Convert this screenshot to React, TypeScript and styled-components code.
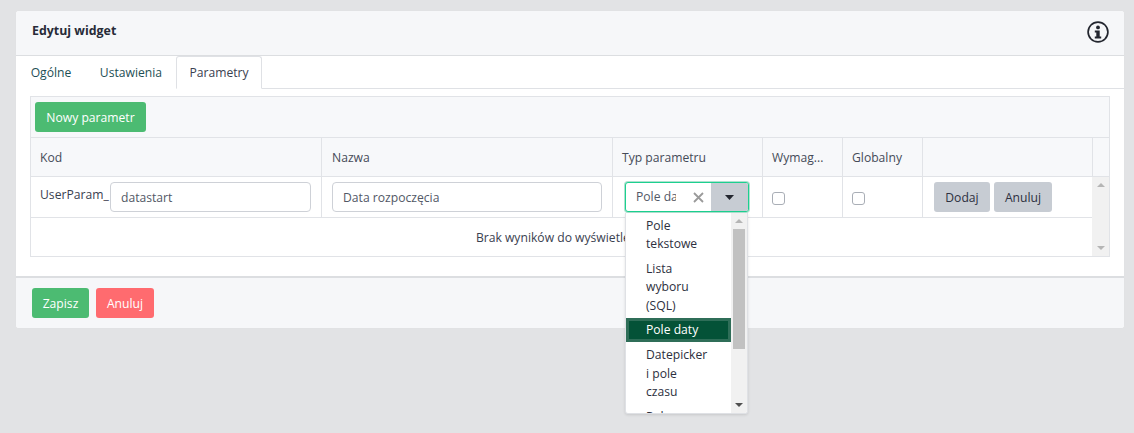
import React from "react";
import styled, { createGlobalStyle } from "styled-components";

const Global = createGlobalStyle`
  html, body { margin: 0; padding: 0; background: #e2e3e5; height: 433px; overflow: hidden; }
  body { font-family: "Open Sans", "Noto Sans", sans-serif; font-size: 12.15px; color: #2d3040; }
  * { box-sizing: border-box; }
`;

const Page = styled.div`
  padding: 11px 10px 0 16px;
`;
const Card = styled.section`
  background: #fff;
  border-radius: 3px;
  box-shadow: 0 0 1px rgba(0, 0, 0, 0.06);
`;
const CardHeader = styled.header`
  height: 45px;
  display: flex;
  align-items: center;
  justify-content: space-between;
  padding: 0 15px 2px 16px;
  background: #f6f7f9;
  border-bottom: 1px solid #dcdee1;
  border-radius: 3px 3px 0 0;
`;
const Title = styled.h2`
  margin: 0 0 4px;
  font-size: 12.4px;
  font-weight: 700;
  color: #272b38;
`;
const Tabs = styled.nav`
  height: 33px;
  display: flex;
  border-bottom: 1px solid #dfe1e5;
`;
const Tab = styled.div<{ $active?: boolean; $w: number }>`
  width: ${(p) => p.$w}px;
  height: 33px;
  display: flex;
  align-items: center;
  justify-content: center;
  color: ${(p) => (p.$active ? "#3a4150" : "#1e4f55")};
  background: #fff;
  border: 1px solid ${(p) => (p.$active ? "#dfe1e5" : "transparent")};
  border-bottom-color: ${(p) => (p.$active ? "#fff" : "transparent")};
  border-radius: 3px 3px 0 0;
`;
const TabBody = styled.div`
  padding: 7px 14px 19px 14px;
  border-bottom: 2px solid #dcdee1;
`;
const Grid = styled.div`
  border: 1px solid #e1e3e7;
  width: 1080px;
`;
const Toolbar = styled.div`
  height: 41px;
  padding: 5px 4px;
  background: #f7f8fa;
  border-bottom: 1px solid #e1e3e7;
`;
const Btn = styled.button<{ $bg: string; $fg?: string; $w: number }>`
  width: ${(p) => p.$w}px;
  height: 30px;
  padding: 0;
  border: 0;
  border-radius: 3px;
  font: inherit;
  color: ${(p) => p.$fg ?? "#fff"};
  background: ${(p) => p.$bg};
`;
const HeadRow = styled.div`
  display: grid;
  grid-template-columns: 291px 291px 150px 80px 80px 170px 1fr;
  height: 39px;
  background: #f7f8fa;
  border-bottom: 1px solid #e1e3e7;
`;
const HeadCell = styled.div`
  display: flex;
  align-items: center;
  padding: 0 9px;
  color: #454b58;
  border-right: 1px solid #e1e3e7;
  &:nth-child(2) { padding-left: 10px; }
  &:last-child { border-right: 0; }
`;
const BodyWrap = styled.div`
  display: flex;
  height: 79px;
`;
const BodyMain = styled.div`
  flex: 1;
  min-width: 0;
`;
const Row = styled.div`
  display: grid;
  grid-template-columns: 291px 291px 150px 80px 80px 170px;
  height: 41px;
  border-bottom: 1px solid #e1e3e7;
`;
const Cell = styled.div<{ $pad?: string }>`
  display: flex;
  align-items: center;
  padding: ${(p) => p.$pad ?? "0 10px"};
  border-right: 1px solid #e1e3e7;
  position: relative;
  &:last-child { border-right: 0; }
`;
const Prefix = styled.span`
  color: #3a4150;
  width: 70px;
  flex: none;
  margin-top: -6px;
  white-space: nowrap;
`;
const Input = styled.input`
  flex: 1;
  min-width: 0;
  height: 30px;
  padding: 0 10px;
  border: 1px solid #ced1d7;
  border-radius: 4px;
  background: #fff;
  font: inherit;
  color: #525866;
`;
const Select = styled.div`
  position: relative;
  display: flex;
  width: 124px;
  height: 30px;
  border: 1px solid #1cd08f;
  box-shadow: 0 0 0 1px rgba(25, 170, 120, 0.35);
  border-radius: 3px;
  overflow: hidden;
  background: #fff;
`;
const SelectValue = styled.div`
  width: 40px;
  margin-left: 10px;
  overflow: hidden;
  white-space: nowrap;
  line-height: 28px;
  color: #525866;
`;
const Clear = styled.div`
  width: 35px;
  padding-left: 9px;
  display: flex;
  align-items: center;
  justify-content: center;
  svg { display: block; }
`;
const Caret = styled.div`
  flex: 1;
  display: flex;
  align-items: center;
  justify-content: center;
  background: #c7ccd3;
`;
const Drop = styled.div`
  position: absolute;
  left: 12px;
  top: 36px;
  width: 123px;
  height: 201px;
  display: flex;
  background: #fff;
  border: 1px solid #dfe1e5;
  border-top: 0;
  border-radius: 0 0 3px 3px;
  box-shadow: 0 1px 3px rgba(0, 0, 0, 0.12);
  z-index: 5;
  overflow: hidden;
`;
const OptList = styled.div`
  width: 105px;
  flex: none;
  overflow: hidden;
`;
const Option = styled.div<{ $selected?: boolean }>`
  padding: ${(p) => (p.$selected ? "0 17px" : "4px 20px 2px")};
  margin-top: ${(p) => (p.$selected ? "1px" : "0")};
  line-height: 18.4px;
  color: ${(p) => (p.$selected ? "#fff" : "#2d3040")};
  background: ${(p) => (p.$selected ? "#045237" : "transparent")};
  border: ${(p) => (p.$selected ? "3px solid #2f6e58" : "0")};
`;
const DropBar = styled.div`
  flex: 1;
  position: relative;
  background: #f1f1f1;
`;
const Thumb = styled.div`
  position: absolute;
  top: 16px;
  left: 2px;
  right: 2px;
  height: 120px;
  background: #c1c1c1;
`;
const ArrowUp = styled.i<{ $c: string }>`
  position: absolute;
  top: 6px;
  left: 50%;
  margin-left: -4px;
  border: 4px solid transparent;
  border-top: 0;
  border-bottom: 4px solid ${(p) => p.$c};
`;
const ArrowDown = styled.i<{ $c: string }>`
  position: absolute;
  bottom: 6px;
  left: 50%;
  margin-left: -4px;
  border: 4px solid transparent;
  border-bottom: 0;
  border-top: 4px solid ${(p) => p.$c};
`;
const Check = styled.span`
  width: 13px;
  height: 13px;
  border: 1px solid #a9aeb6;
  border-radius: 3px;
  background: #fff;
  margin-top: 3px;
`;
const Actions = styled.div`
  display: flex;
  gap: 4px;
`;
const Empty = styled.div`
  height: 38px;
  display: flex;
  align-items: center;
  justify-content: center;
  color: #3a4150;
`;
const BodyBar = styled.div`
  width: 17px;
  flex: none;
  position: relative;
  background: #f1f1f1;
`;
const Footer = styled.footer`
  height: 50px;
  padding: 10px 16px;
  display: flex;
  gap: 7px;
  background: #f6f7f9;
  border-radius: 0 0 3px 3px;
`;

const InfoIcon = () => (
  <svg width="22" height="22" viewBox="0 0 22 22" fill="none" aria-hidden="true">
    <circle cx="11" cy="11" r="9.9" stroke="#23262f" strokeWidth="1.7" />
    <circle cx="11" cy="6.4" r="1.9" fill="#23262f" />
    <path d="M7.8 9.4h4.9v6h1.5v2H7.8v-2h1.5v-4H7.8z" fill="#23262f" />
  </svg>
);

export default function App() {
  return (
    <Page>
      <Global />
      <Card>
        <CardHeader>
          <Title>Edytuj widget</Title>
          <InfoIcon />
        </CardHeader>
        <Tabs>
          <Tab $w={70}>Ogólne</Tab>
          <Tab $w={90}>Ustawienia</Tab>
          <Tab $w={86} $active>Parametry</Tab>
        </Tabs>
        <TabBody>
          <Grid>
            <Toolbar>
              <Btn $w={111} $bg="#4cbb72">Nowy parametr</Btn>
            </Toolbar>
            <HeadRow>
              <HeadCell>Kod</HeadCell>
              <HeadCell>Nazwa</HeadCell>
              <HeadCell>Typ parametru</HeadCell>
              <HeadCell>Wymag...</HeadCell>
              <HeadCell>Globalny</HeadCell>
              <HeadCell />
              <HeadCell />
            </HeadRow>
            <BodyWrap>
              <BodyMain>
                <Row>
                  <Cell $pad="0 10px 0 9px">
                    <Prefix>UserParam_</Prefix>
                    <Input readOnly value="datastart" />
                  </Cell>
                  <Cell>
                    <Input readOnly value="Data rozpoczęcia" />
                  </Cell>
                  <Cell $pad="0 12px">
                    <Select>
                      <SelectValue>Pole daty</SelectValue>
                      <Clear>
                        <svg width="11" height="11" viewBox="0 0 11 11" aria-hidden="true">
                          <path d="M1 1l9 9M10 1l-9 9" stroke="#9a9a9a" strokeWidth="1.8" />
                        </svg>
                      </Clear>
                      <Caret>
                        <svg width="9" height="5" viewBox="0 0 9 5" aria-hidden="true">
                          <path d="M0 0h9L4.5 5z" fill="#23262f" />
                        </svg>
                      </Caret>
                    </Select>
                    <Drop>
                      <OptList>
                        <Option>Pole<br />tekstowe</Option>
                        <Option>Lista<br />wyboru<br />(SQL)</Option>
                        <Option $selected>Pole daty</Option>
                        <Option>Datepicker<br />i pole<br />czasu</Option>
                        <Option>Pole</Option>
                      </OptList>
                      <DropBar>
                        <ArrowUp $c="#b5b5b5" />
                        <Thumb />
                        <ArrowDown $c="#505050" />
                      </DropBar>
                    </Drop>
                  </Cell>
                  <Cell $pad="0 9px"><Check /></Cell>
                  <Cell $pad="0 9px"><Check /></Cell>
                  <Cell $pad="0 11px">
                    <Actions>
                      <Btn $w={56} $bg="#c7ccd3" $fg="#2d3040">Dodaj</Btn>
                      <Btn $w={58} $bg="#c7ccd3" $fg="#2d3040">Anuluj</Btn>
                    </Actions>
                  </Cell>
                </Row>
                <Empty>Brak wyników do wyświetlenia</Empty>
              </BodyMain>
              <BodyBar>
                <ArrowUp $c="#b5b5b5" />
                <ArrowDown $c="#b5b5b5" />
              </BodyBar>
            </BodyWrap>
          </Grid>
        </TabBody>
        <Footer>
          <Btn $w={57} $bg="#4cbb72">Zapisz</Btn>
          <Btn $w={58} $bg="#ff6b6f">Anuluj</Btn>
        </Footer>
      </Card>
    </Page>
  );
}
